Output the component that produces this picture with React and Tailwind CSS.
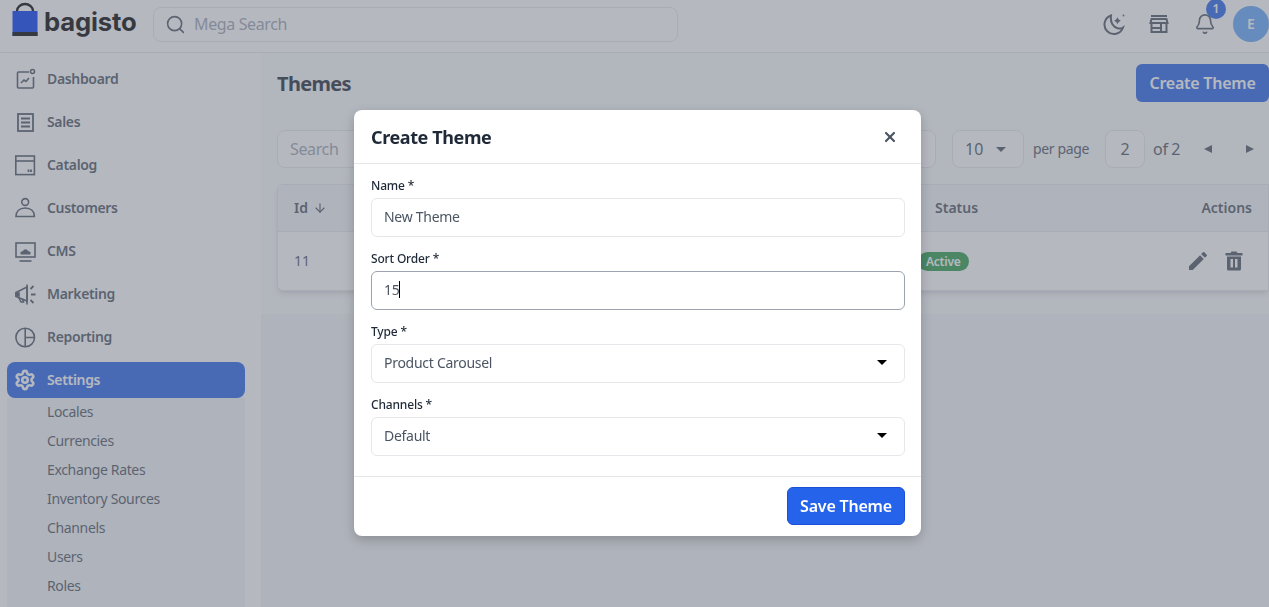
import { Bell, ArrowDown, Search, Settings, X } from 'lucide-react';

function BagLogo() {
  return (
    <svg width="26" height="35" viewBox="0 0 26 35" className="shrink-0">
      <path d="M5 12V9a8 7 0 0 1 16 0v3" fill="none" stroke="#000" strokeWidth="2.400" />
      <rect x="0.500" y="9" width="25" height="25" fill="#0038f6" />
      <rect x="0.500" y="30" width="25" height="4" fill="#000" />
    </svg>
  );
}

const iconProps = { width: 24, height: 24, viewBox: '0 0 24 24', fill: 'none', stroke: 'currentColor', strokeWidth: 1.6, className: 'shrink-0' };

function DashboardIcon() {
  return (
    <svg {...iconProps}>
      <path d="M16 5H5.500a1 1 0 0 0-1 1v14a1 1 0 0 0 1 1h14a1 1 0 0 0 1-1V10" />
      <circle cx="19.500" cy="4.500" r="2" />
      <path d="M8 16l3-3 2 1.500 3-3.500" />
    </svg>
  );
}

function SalesIcon() {
  return (
    <svg {...iconProps} strokeWidth="1.800">
      <rect x="5" y="4" width="15" height="17" />
      <path d="M8 8.500h9M8 12.500h9M8 16.500h9" />
    </svg>
  );
}

function CatalogIcon() {
  return (
    <svg {...iconProps}>
      <rect x="2.800" y="3" width="18.600" height="18.600" />
      <path d="M2.800 8h18.600" />
      <path d="M15.500 16.500v2.500M18 16.500v2.500" strokeWidth="1.800" />
    </svg>
  );
}

function CustomersIcon() {
  return (
    <svg {...iconProps}>
      <circle cx="12.200" cy="6" r="3.400" />
      <path d="M3 20.500c0-5 3.500-8.500 9.200-8.500s9.200 3.500 9.200 8.500z" />
    </svg>
  );
}

function CmsIcon() {
  return (
    <svg {...iconProps}>
      <rect x="3" y="4" width="19" height="14" />
      <path d="M6.500 22h12" />
      <path d="M7.500 15.500h10v-2.500l-2.500-1-1-1.500h-3l-1 1.500-2.500 1z" fill="currentColor" stroke="none" />
    </svg>
  );
}

function MarketingIcon() {
  return (
    <svg {...iconProps}>
      <path d="M3 10.500l11-5.500v14l-11-4.500z" />
      <path d="M3 11h3v3H3z" fill="currentColor" />
      <path d="M6 16l2 4h2.500l-1-3" />
      <path d="M17.500 7l3-3M18 12.500h4.500M17.500 18l3 3" strokeWidth="1.800" />
      <path d="M14 2.500v20" />
    </svg>
  );
}

function ReportingIcon() {
  return (
    <svg {...iconProps}>
      <circle cx="12.200" cy="12.500" r="9.300" />
      <path d="M12.200 3.200v18.600M12.200 12.500h9.300" />
    </svg>
  );
}

function GearIcon() {
  return <Settings size={22} strokeWidth={2.800} className="mx-px shrink-0" />;
}

function MoonIcon() {
  return (
    <svg width="24" height="24" viewBox="0 0 24 24" fill="none" className="text-[#4b5563]">
      <path d="M9 3.500a9.500 9.500 0 1 0 12 12c-1.500 1-3.500 1.200-5.300.800C11.500 15.300 8 11 9 3.500z" stroke="currentColor" strokeWidth="2" />
      <path d="M17 5l1.500 2.500L21 9l-2.500 1.500L17 13l-1.500-2.500L13 9l2.500-1.500z" fill="currentColor" transform="translate(1 1) scale(0.85 0.85)" />
      <circle cx="21.500" cy="3.500" r="0.900" fill="currentColor" />
    </svg>
  );
}

function StoreIcon() {
  return (
    <svg width="24" height="24" viewBox="0 0 24 24" fill="none" stroke="currentColor" strokeWidth="2" className="text-[#4b5563]">
      <path d="M4 4h16" />
      <path d="M3.500 11l1-4h15l1 4z" />
      <path d="M4.500 11v9h15v-9M4.500 16h9M14 11v9" />
    </svg>
  );
}

function EditIcon() {
  return (
    <svg width="24" height="24" viewBox="0 0 24 24" fill="currentColor">
      <path d="M3 17.250V21h3.750L17.810 9.940l-3.750-3.750L3 17.250zM20.710 7.040a1 1 0 0 0 0-1.410l-2.340-2.340a1 1 0 0 0-1.410 0l-1.830 1.830 3.750 3.750 1.830-1.830z" />
    </svg>
  );
}

function DeleteIcon() {
  return (
    <svg width="24" height="24" viewBox="0 0 24 24" fill="currentColor">
      <path fillRule="evenodd" d="M9.500 2.500h5l1 1.500h5v2.500h-17V4h5zM5 7.500h14V20a1.500 1.500 0 0 1-1.500 1.500h-11A1.500 1.500 0 0 1 5 20zM8.500 10v8.500h2.500V10zM13 10v8.500h2.500V10z" />
    </svg>
  );
}

function Caret({ className }) {
  return <span className={'h-0 w-0 border-x-[5px] border-t-[5px] border-x-transparent ' + className} />;
}

const navItems = [
  { label: 'Dashboard', icon: DashboardIcon },
  { label: 'Sales', icon: SalesIcon },
  { label: 'Catalog', icon: CatalogIcon },
  { label: 'Customers', icon: CustomersIcon },
  { label: 'CMS', icon: CmsIcon },
  { label: 'Marketing', icon: MarketingIcon },
  { label: 'Reporting', icon: ReportingIcon },
];

const settingsItems = ['Locales', 'Currencies', 'Exchange Rates', 'Inventory Sources', 'Channels', 'Users', 'Roles'];

function Sidebar() {
  return (
    <aside className="flex w-[261px] shrink-0 flex-col gap-[7px] overflow-hidden bg-white pt-2 pr-[16px] pl-[7px] shadow-[0_8px_10px_0_rgba(0,0,0,0.2)]">
      {navItems.map(({ label, icon: Icon }) => (
        <div key={label} className="flex h-9 shrink-0 items-center gap-[10px] pl-[6px] text-sm font-semibold tracking-[-0.024em] text-[#4b5563]">
          <Icon />
          {label}
        </div>
      ))}
      <div className="flex min-h-0 flex-1 flex-col">
        <div className="flex h-9 shrink-0 items-center gap-[10px] rounded-lg bg-[#2563eb] pl-[6px] text-sm font-semibold tracking-[-0.024em] text-white">
          <GearIcon />
          Settings
        </div>
        <div className="flex flex-1 flex-col gap-[9px] bg-[#f3f4f6] pt-1 pl-[40px] text-sm leading-5 tracking-[-0.025em] text-[#4b5563]">
          {settingsItems.map((item) => (
            <div key={item}>{item}</div>
          ))}
        </div>
      </div>
    </aside>
  );
}

function Topbar() {
  return (
    <header className="flex h-[53px] shrink-0 items-center border-b border-[#e5e7eb] bg-white pl-3">
      <div className="mb-[13px] flex w-[141px] items-center gap-[6px]">
        <BagLogo />
        <span className="mt-[5px] font-['Inter'] text-[25.700px] leading-none font-bold tracking-[-0.2px] text-black">bagisto</span>
      </div>
      <div className="mb-1 flex h-[35px] w-[525px] items-center gap-2 rounded-lg border border-[#e5e7eb] px-[11px] text-base tracking-[-0.023em] text-[#9ca3af]">
        <Search size={21} className="text-[#4b5563]" strokeWidth={1.800} />
        Mega Search
      </div>
      <div className="mb-1 ml-auto flex items-center">
        <MoonIcon />
        <span className="ml-[21px]"><StoreIcon /></span>
        <div className="relative ml-[23px] text-[#4b5563]">
          <Bell size={22} strokeWidth={1.800} />
          <span className="absolute -top-[14px] -right-[10px] flex h-5 w-5 items-center justify-center rounded-full bg-[#2563eb] text-xs font-semibold text-white">1</span>
        </div>
        <div className="ml-[17px] flex h-9 w-9 items-center justify-center rounded-full bg-[#60a5fa] text-sm font-semibold text-white">E</div>
      </div>
    </header>
  );
}

function Content() {
  return (
    <main className="min-w-0 flex-1 bg-[#f3f4f6]">
      <div className="bg-[#f9fafb] pb-[23px] pl-4">
        <div className="flex items-center justify-between pt-[11px]">
          <h1 className="mt-[2px] text-xl font-bold tracking-[-0.033em] text-[#1f2937]">Themes</h1>
          <button className="flex h-[38px] w-[133px] items-center justify-center rounded-md bg-[#2563eb] text-base font-semibold tracking-[-0.015em] text-white">Create Theme</button>
        </div>
        <div className="mt-7 flex h-[38px] items-center text-[#4b5563]">
          <div className="flex h-full w-[659px] items-center rounded-lg border border-[#e5e7eb] bg-white px-3 text-base tracking-[-0.023em] text-[#9ca3af]">Search</div>
          <div className="ml-4 flex h-full w-[72px] items-center justify-between rounded-lg border border-[#e5e7eb] bg-white pr-[17px] pl-3 text-base">
            10
            <Caret className="border-t-[#4b5563]" />
          </div>
          <span className="ml-[9px] text-sm tracking-[-0.025em]">per page</span>
          <div className="ml-[16px] flex h-full w-10 items-center justify-center rounded-lg border border-[#e5e7eb] bg-white text-base">2</div>
          <span className="ml-2 text-base tracking-[-0.023em]">of 2</span>
          <Caret className="ml-[24px] !border-y-[4px] !border-r-[8px] !border-l-0 !border-y-transparent border-r-[#4b5563]" />
          <Caret className="ml-[34px] !border-y-[4px] !border-r-0 !border-l-[8px] !border-y-transparent border-l-[#4b5563]" />
        </div>
        <div className="mt-4 rounded-l-md border border-[#e5e7eb] bg-white text-sm text-[#4b5563] shadow-md">
          <div className="flex h-[47px] items-center border-b border-[#e5e7eb] bg-[#f3f4f6] px-4 font-semibold">
            <div className="flex w-[641px] items-center gap-[5px]">
              Id
              <ArrowDown size={14} />
            </div>
            <div>Status</div>
            <div className="ml-auto">Actions</div>
          </div>
          <div className="flex h-[58px] items-center px-4">
            <div className="w-[624px]">11</div>
            <span className="rounded-full bg-[#2b9c48] px-2 text-xs leading-[19px] font-semibold tracking-[-0.02em] text-white">Active</span>
            <div className="ml-auto flex items-center gap-3 pr-1.5">
              <EditIcon />
              <DeleteIcon />
            </div>
          </div>
        </div>
      </div>
    </main>
  );
}

const fieldBox = 'flex h-[39px] items-center rounded-md border bg-white px-3 pb-[2px] text-sm tracking-[-0.02em] text-[#4b5563]';

function Field({ label, children }) {
  return (
    <div className="mb-[13px]">
      <label className="mb-1 block pt-px text-xs leading-4 font-medium tracking-[-0.014em] text-[#1f2937]">{label}</label>
      {children}
    </div>
  );
}

function CreateThemeModal() {
  return (
    <div className="fixed inset-0 z-10 bg-[#6b7280]/50 pt-[110px] pl-[354px]">
      <div className="w-[567px] rounded-lg bg-white shadow-[0_4px_12px_rgba(0,0,0,0.2)]">
        <div className="flex h-[54px] items-center justify-between border-b border-[#e5e7eb] pr-[23px] pl-[17px]">
          <h2 className="text-lg font-bold tracking-[-0.022em] text-[#1f2937]">Create Theme</h2>
          <X size={16} strokeWidth={3.200} className="mt-[1px] text-[#4b5563]" />
        </div>
        <div className="pt-[13px] pr-4 pl-[17px]">
          <Field label="Name *">
            <div className={fieldBox + ' border-[#e5e7eb]'}>New Theme</div>
          </Field>
          <Field label="Sort Order *">
            <div className={fieldBox + ' border-[#9ca3af]'}>
              15<span className="h-[17px] w-px bg-black" />
            </div>
          </Field>
          <Field label="Type *">
            <div className={fieldBox + ' justify-between border-[#e5e7eb]'}>
              Product Carousel
              <Caret className="mr-[5px] border-t-black" />
            </div>
          </Field>
          <Field label="Channels *">
            <div className={fieldBox + ' justify-between border-[#e5e7eb]'}>
              Default
              <Caret className="mr-[5px] border-t-black" />
            </div>
          </Field>
        </div>
        <div className="mt-5 flex h-[60px] items-center justify-end border-t border-[#e5e7eb] pr-4 pb-[2px]">
          <button className="h-[38px] w-[118px] rounded-md border border-[#1d4ed8] bg-[#2563eb] text-base font-semibold tracking-[-0.012em] text-white">Save Theme</button>
        </div>
      </div>
    </div>
  );
}

export default function App() {
  return (
    <div className="flex h-screen flex-col overflow-hidden bg-white font-['Noto_Sans',sans-serif]">
      <Topbar />
      <div className="flex min-h-0 flex-1">
        <Sidebar />
        <Content />
      </div>
      <CreateThemeModal />
    </div>
  );
}
